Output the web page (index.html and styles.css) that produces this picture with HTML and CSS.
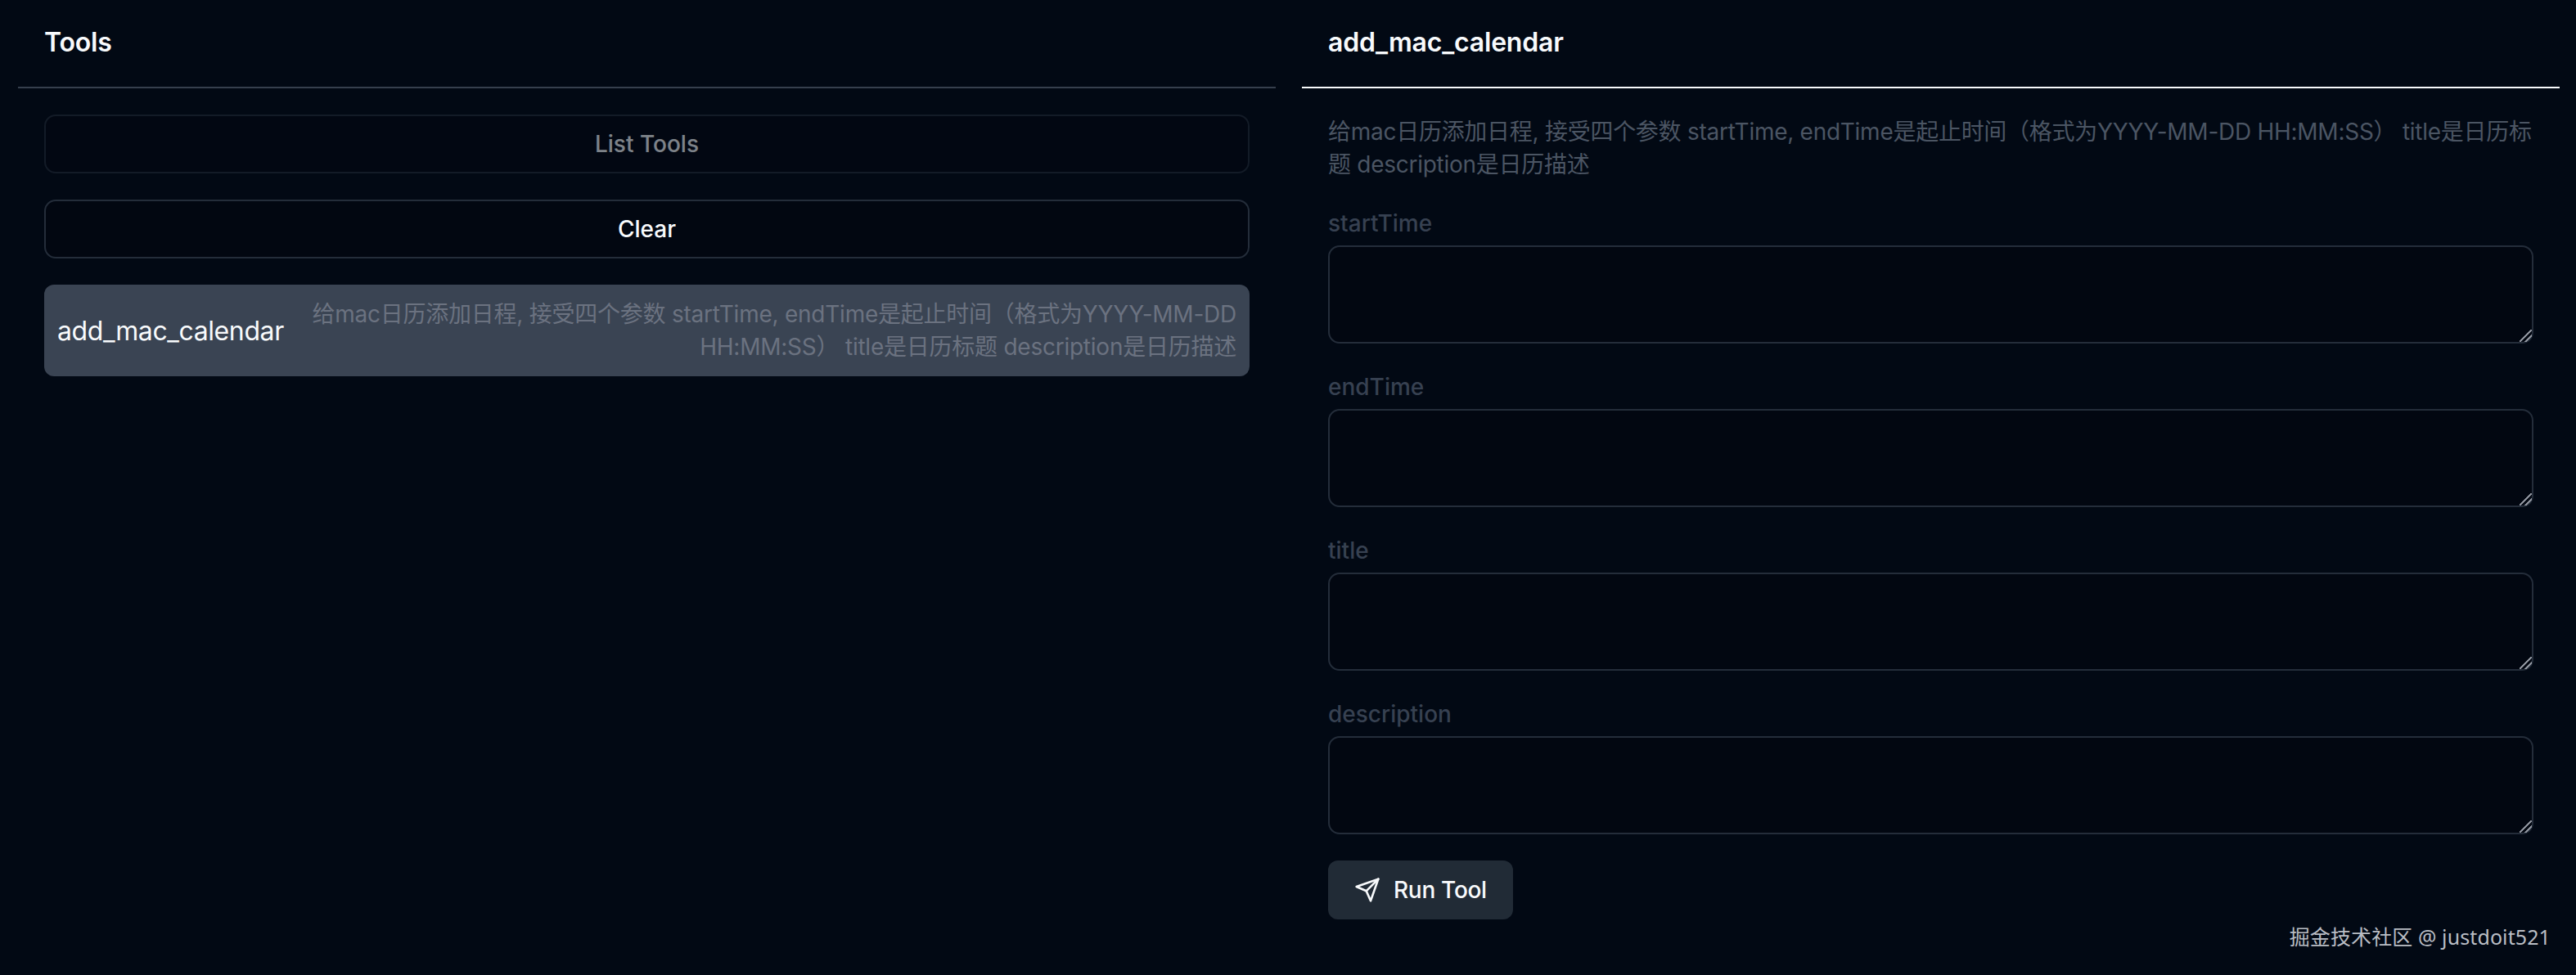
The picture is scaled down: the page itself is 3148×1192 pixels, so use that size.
FILE: index.html
```html
<!DOCTYPE html>
<html lang="zh-CN">
<head>
<meta charset="utf-8">
<title>Tools</title>
<link rel="stylesheet" href="styles.css">
</head>
<body>
<main class="page">
  <section class="panel">
    <header class="panel-head">
      <h3 class="panel-title panel-title-strong">Tools</h3>
    </header>
    <div class="panel-body">
      <button class="btn btn-disabled" type="button" disabled>List Tools</button>
      <button class="btn" type="button">Clear</button>
      <div class="tool-item">
        <span class="tool-name">add_mac_calendar</span>
        <span class="tool-desc">给mac日历添加日程, 接受四个参数 startTime, endTime是起止时间（格式为YYYY-MM-DD HH:MM:SS） title是日历标题 description是日历描述</span>
      </div>
    </div>
  </section>
  <section class="panel">
    <header class="panel-head panel-head-active">
      <h3 class="panel-title panel-title-strong">add_mac_calendar</h3>
    </header>
    <div class="panel-body">
      <p class="desc">给mac日历添加日程, 接受四个参数 startTime, endTime是起止时间（格式为YYYY-MM-DD HH:MM:SS） title是日历标题 description是日历描述</p>
      <div class="field">
        <label class="field-label" for="f1">startTime</label>
        <textarea class="field-input" id="f1"></textarea>
      </div>
      <div class="field">
        <label class="field-label" for="f2">endTime</label>
        <textarea class="field-input" id="f2"></textarea>
      </div>
      <div class="field">
        <label class="field-label" for="f3">title</label>
        <textarea class="field-input" id="f3"></textarea>
      </div>
      <div class="field">
        <label class="field-label" for="f4">description</label>
        <textarea class="field-input" id="f4"></textarea>
      </div>
      <button class="run-btn" type="button">
        <svg class="run-icon" viewBox="0 0 24 24" fill="none" stroke="currentColor" stroke-width="2" stroke-linecap="round" stroke-linejoin="round" aria-hidden="true"><path d="m22 2-7 20-4-9-9-4Z"></path><path d="M22 2 11 13"></path></svg>
        <span>Run Tool</span>
      </button>
    </div>
  </section>
</main>
<div class="watermark">掘金技术社区 @ justdoit521</div>
</body>
</html>
```

FILE: styles.css
```css
* { box-sizing: border-box; }
html, body { margin: 0; height: 100%; }
body {
  background: #020914;
  color: #f8fafc;
  color-scheme: dark;
  font-family: Inter, "Noto Sans CJK SC", sans-serif;
  overflow: hidden;
}
.page {
  display: grid;
  grid-template-columns: 1537px 1537px;
  gap: 32px;
  padding: 0 20px 0 22px;
}
.panel { display: flex; flex-direction: column; }
.panel-head {
  height: 108px;
  padding: 32px 32px 0;
  border-bottom: 2px solid #363f4d;
}
.panel-head-active { border-bottom-color: #f8fafc; }
.panel-title {
  margin: 0;
  font-size: 32px;
  line-height: 40px;
  font-weight: 500;
}
.panel-title-strong { font-weight: 600; letter-spacing: -0.2px; }
.panel-body {
  display: flex;
  flex-direction: column;
  gap: 32px;
  padding: 32px;
}
.btn {
  height: 72px;
  padding: 0;
  background: #020711;
  border: 2px solid #242d3a;
  border-radius: 14px;
  color: #f8fafc;
  font: 500 28px/40px Inter, sans-serif;
}
.btn-disabled { opacity: .5; }
.tool-item {
  display: flex;
  justify-content: space-between;
  align-items: center;
  gap: 32px;
  height: 112px;
  padding: 16px;
  background: #3a4453;
  border-radius: 12px;
}
.tool-name {
  padding-top: 2px;
  font-size: 32px;
  line-height: 40px;
  letter-spacing: -0.4px;
  white-space: nowrap;
}
.tool-desc {
  font-size: 28px;
  line-height: 40px;
  letter-spacing: -0.24px;
  color: #6b7280;
  text-align: right;
  width: 1130px;
  flex: none;
}
.desc {
  margin: 0 0 -1px;
  padding-top: 1px;
  font-size: 28px;
  line-height: 40px;
  letter-spacing: -0.27px;
  color: #4b5563;
}
.field { display: flex; flex-direction: column; gap: 8px; }
.field-label {
  padding-top: 2px;
  font-size: 28px;
  line-height: 38px;
  font-weight: 500;
  color: #374151;
}
.field-input {
  display: block;
  width: 100%;
  height: 120px;
  margin: 0;
  padding: 16px 24px;
  background: #020711;
  border: 2px solid #242d3a;
  border-radius: 14px;
  color: #f8fafc;
  font: 28px/40px Inter, sans-serif;
  resize: vertical;
  outline: none;
}
.field-input::-webkit-resizer {
  background: linear-gradient(135deg,
    transparent calc(50% - 1.2px),
    #8d929c calc(50% - 1.2px),
    #8d929c calc(50% + 1.2px),
    transparent calc(50% + 1.2px),
    transparent calc(50% + 3.6px),
    #8d929c calc(50% + 3.6px),
    #8d929c calc(50% + 5.8px),
    transparent calc(50% + 5.8px));
}
.run-btn {
  display: flex;
  align-items: center;
  gap: 16px;
  align-self: flex-start;
  height: 72px;
  padding: 0 32px;
  background: #212b36;
  border: 0;
  border-radius: 12px;
  color: #f8fafc;
  font: 500 28px/40px Inter, sans-serif;
  letter-spacing: -0.3px;
}
.run-icon { width: 32px; height: 32px; display: block; }
.watermark {
  position: absolute;
  right: 31px;
  bottom: 30px;
  font-family: "Noto Sans", "Noto Sans CJK SC", sans-serif;
  font-size: 25px;
  line-height: 34px;
  letter-spacing: 0.1px;
  color: #b9bdc4;
}
```
